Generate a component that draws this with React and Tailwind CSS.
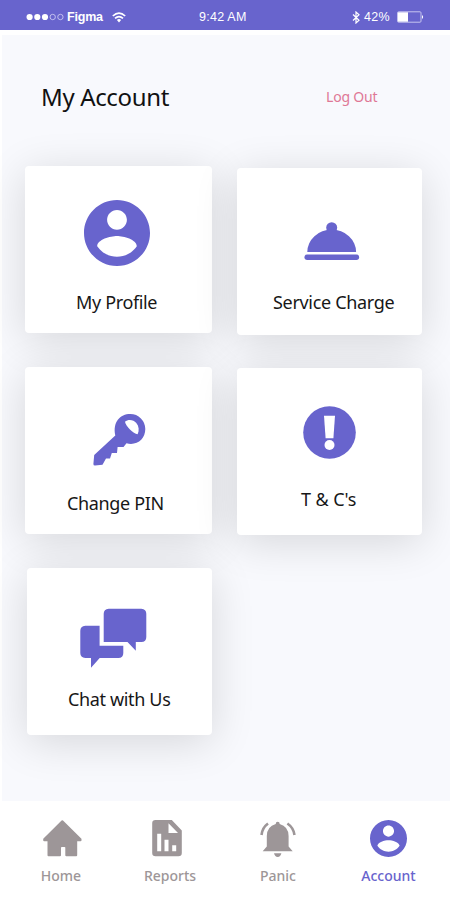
function AccountIcon({ className }) {
  return (
    <svg className={className} viewBox="2 2 20 20" fill="currentColor">
      <path d="M12 2C6.48 2 2 6.48 2 12s4.48 10 10 10 10-4.48 10-10S17.52 2 12 2zm0 3c1.66 0 3 1.34 3 3s-1.34 3-3 3-3-1.34-3-3 1.34-3 3-3zm0 14.2c-2.5 0-4.71-1.28-6-3.22.03-1.99 4-3.08 6-3.08 1.99 0 5.97 1.09 6 3.08-1.29 1.94-3.5 3.22-6 3.22z" />
    </svg>
  );
}

function ServiceIcon({ className }) {
  return (
    <svg className={className} viewBox="0 0 56 40" fill="currentColor">
      <circle cx="27.7" cy="6.7" r="5.5" />
      <path d="M3.3 31A24.4 22.4 0 0 1 52.1 31Z" />
      <rect x="0.5" y="33.6" width="54.6" height="5.4" rx="2.7" />
    </svg>
  );
}

function KeyIcon({ className }) {
  return (
    <svg className={className} viewBox="0 0 53 53" fill="currentColor">
      <path
        fillRule="evenodd"
        d="M22.3 22.5C19.5 9 27 1 37.3 1A15 15 0 0 1 52.3 16C52.3 26 44 33 33.5 30.3L30.5 34H24.6L24 40H18.8L17 45.5H13L9.5 51.8L2 52.6Q0.3 52.6 0.4 51L1.2 42ZM32 8.8C35 6 40.500 6.500 43.300 10C46 13.300 46.400 17.500 44.600 21.300C40.500 20.800 32.600 13.200 32 8.800Z"
      />
    </svg>
  );
}

function AlertIcon({ className }) {
  return (
    <svg className={className} viewBox="0 0 53 53" fill="currentColor">
      <circle cx="26.500" cy="26.500" r="26.300" />
      <path fill="#fff" d="M21 9.700H32L30.400 32.300H22.600Z" />
      <circle fill="#fff" cx="26.500" cy="39" r="5" />
    </svg>
  );
}

function ChatIcon({ className }) {
  return (
    <svg className={className} viewBox="0 0 67 60" fill="currentColor">
      <path d="M28.700 .8H61.300Q66.300 1.300 66.300 5.800V29Q66.300 34 61.300 34H55.800V42.700L47.500 34H23.700V5.800Q23.700 1.300 28.700 .8Z" />
      <path d="M5.300 17.700H19.600V37.700H43.300V45Q43.300 50 38.300 50H19.700L11 59.700V50H5.300Q.3 49.500 .3 45V22.700Q.3 18 5.300 17.700Z" />
    </svg>
  );
}

function HomeIcon({ className }) {
  return (
    <svg className={className} viewBox="0 0 40 38" fill="currentColor" stroke="currentColor" strokeWidth="2" strokeLinejoin="round">
      <path d="M20.300 2.200L38.500 20.300V21.300H34.200V36.200H24.300V28.500Q24.300 27 22.500 27H20Q18 27 18 28.500V36.200H6.500V21.300H2.200V20.300Z" />
    </svg>
  );
}

function ReportsIcon({ className }) {
  return (
    <svg className={className} viewBox="0 0 30 38" fill="currentColor">
      <path
        fillRule="evenodd"
        d="M3.500 1H19.800L29.800 11.500V34Q29.800 37.300 26.500 37.300H3.500Q.2 37.300 .2 34V4.300Q.2 1 3.500 1ZM16.500 4.300V14H26ZM5.200 14.800V32.300H9.200V14.800ZM12.500 20.800V32.300H16.500V20.800ZM20.200 26.300V32.300H24.200V26.300Z"
      />
    </svg>
  );
}

function PanicIcon({ className }) {
  return (
    <svg className={className} viewBox="0 0 38 38" fill="currentColor">
      <path d="M18.700 2.700Q20.700 2.700 20.700 5Q29.500 7.500 29.600 17V27.500L33.700 32.300H3.700L7.800 27.500V17Q7.900 7.500 16.700 5Q16.700 2.700 18.700 2.700Z" />
      <path d="M15 34.300H22.400Q21.500 38 18.700 38T15 34.300Z" />
      <path d="M2.500 16Q3.300 8.700 9 4.500M28.400 4.500Q34.500 8.700 35.500 16" fill="none" stroke="currentColor" strokeWidth="2.600" />
    </svg>
  );
}

function StatusBar() {
  return (
    <header className="flex h-[30px] items-center bg-[#6864cd] pt-1 font-['Liberation_Sans',sans-serif] text-[12px] leading-none text-white">
      <div className="flex w-[199px] items-center pl-[26px]">
        <svg className="h-[8px] w-[39px]" viewBox="0 0 39 8" fill="#fff">
          <circle cx="3.600" cy="4" r="3.100" />
          <circle cx="11.300" cy="4" r="3.100" />
          <circle cx="19" cy="4" r="3.100" />
          <circle cx="26.700" cy="4" r="2.700" fill="none" stroke="#d5d3f5" strokeWidth=".8" />
          <circle cx="34.400" cy="4" r="2.700" fill="none" stroke="#d5d3f5" strokeWidth=".8" />
        </svg>
        <span className="ml-[2px] w-[36px] text-[12.500px] font-bold tracking-[-0.2px]">Figma</span>
        <svg className="ml-[9px] h-[11px] w-[14px]" viewBox="0 0 14 11" fill="none" stroke="#fff" strokeWidth="1.700">
          <path d="M.8 4Q7-1.800 13.200 4M3 6.400Q7 2.700 11 6.400" />
          <path d="M4.900 8Q7 6 9.100 8L7 10.500Z" fill="#fff" stroke="none" />
        </svg>
      </div>
      <span className="w-[153px] text-[12.500px] tracking-[0.25px]">9:42 AM</span>
      <svg className="h-[13px] w-[8px]" viewBox="0 0 8 13" fill="none" stroke="#fff" strokeWidth="1.200">
        <path d="M1 3.500L7 9.200L4 12V1L7 3.800L1 9.500" />
      </svg>
      <span className="ml-[4px] w-[33px] text-[12.500px] tracking-[0.25px]">42%</span>
      <svg className="h-[12px] w-[28px]" viewBox="0 0 28 12">
        <rect x=".5" y=".8" width="23.500" height="10.400" rx="1" fill="none" stroke="#c6c4ef" />
        <rect x="1" y="1.300" width="10" height="9.400" fill="#fff" />
        <path d="M25 4Q27.300 6 25 8Z" fill="#fff" />
      </svg>
    </header>
  );
}

const cards = [
  { label: "My Profile", Icon: AccountIcon, box: "w-[187px] h-[167px] pt-[34px]", icon: "w-[66px] h-[66px] ml-[59px]", text: "mt-[25px] ml-[51px] tracking-[-0.35px]" },
  { label: "Service Charge", Icon: ServiceIcon, box: "w-[185px] h-[167px] mt-[2px] ml-[25px] pt-[53px]", icon: "w-[56px] h-[40px] ml-[67px]", text: "mt-[30px] ml-[36px] tracking-[-0.32px]" },
  { label: "Change PIN", Icon: KeyIcon, box: "w-[187px] h-[167px] pt-[46px]", icon: "w-[53px] h-[53px] ml-[68px]", text: "mt-[26px] ml-[42px] tracking-[-0.35px]" },
  { label: "T & C's", Icon: AlertIcon, box: "w-[185px] h-[167px] mt-[1px] ml-[25px] pt-[38px]", icon: "w-[53px] h-[53px] ml-[65.500px]", text: "mt-[29px] ml-[64px] tracking-[-0.1px]" },
  { label: "Chat with Us", Icon: ChatIcon, box: "w-[185px] h-[167px] mt-[1px] ml-[2px] pt-[40px]", icon: "w-[67px] h-[60px] ml-[53px]", text: "mt-[20px] ml-[41px] tracking-[-0.35px]" },
];

const tabs = [
  { label: "Home", Icon: HomeIcon, icon: "w-[40px] h-[38px] ml-[1px]", color: "text-[#9d9698]", text: "-ml-[1px]" },
  { label: "Reports", Icon: ReportsIcon, icon: "w-[30px] h-[38px] -ml-[8px]", color: "text-[#9d9698]", text: "-ml-[1px]" },
  { label: "Panic", Icon: PanicIcon, icon: "w-[38px] h-[38px] -ml-[3px]", color: "text-[#9d9698]", text: "-ml-[3px]" },
  { label: "Account", Icon: AccountIcon, icon: "w-[37px] h-[37px] mt-[1px]", color: "text-[#6864cd]", text: "" },
];

export default function App() {
  return (
    <div className="flex h-[900px] w-[450px] flex-col overflow-hidden bg-white font-['Noto_Sans',sans-serif]">
      <StatusBar />
      <main className="mt-[5px] ml-[2px] h-[766px] bg-[#f8f9fd]">
        <div className="flex h-[131px] items-start pt-[46px] pl-[39px]">
          <h1 className="w-[285px] text-[24px] leading-[32px] tracking-[-0.35px] whitespace-nowrap text-[#111]">My Account</h1>
          <button className="mt-[4px] text-[14px] leading-[24px] tracking-[-0.2px] whitespace-nowrap text-[#df7896]">Log Out</button>
        </div>
        <div className="grid grid-cols-[187px_210px] gap-y-[32px] pl-[23px]">
          {cards.map(({ label, Icon, box, icon, text }) => (
            <div key={label} className={`flex flex-col items-start rounded-[4px] bg-white shadow-[0_7px_44px_rgba(0,0,0,0.14)] ${box}`}>
              <Icon className={`shrink-0 text-[#6864cd] ${icon}`} />
              <span className={`text-[18px] leading-[22px] whitespace-nowrap text-[#171717] ${text}`}>{label}</span>
            </div>
          ))}
        </div>
      </main>
      <nav className="ml-[7px] grid w-[436px] grid-cols-4 pt-[18px]">
        {tabs.map(({ label, Icon, icon, color, text }) => (
          <div key={label} className={`flex flex-col items-center ${color}`}>
            <Icon className={icon} />
            <span className={`mt-[9px] text-[14px] leading-[20px] font-medium ${text}`}>{label}</span>
          </div>
        ))}
      </nav>
    </div>
  );
}
